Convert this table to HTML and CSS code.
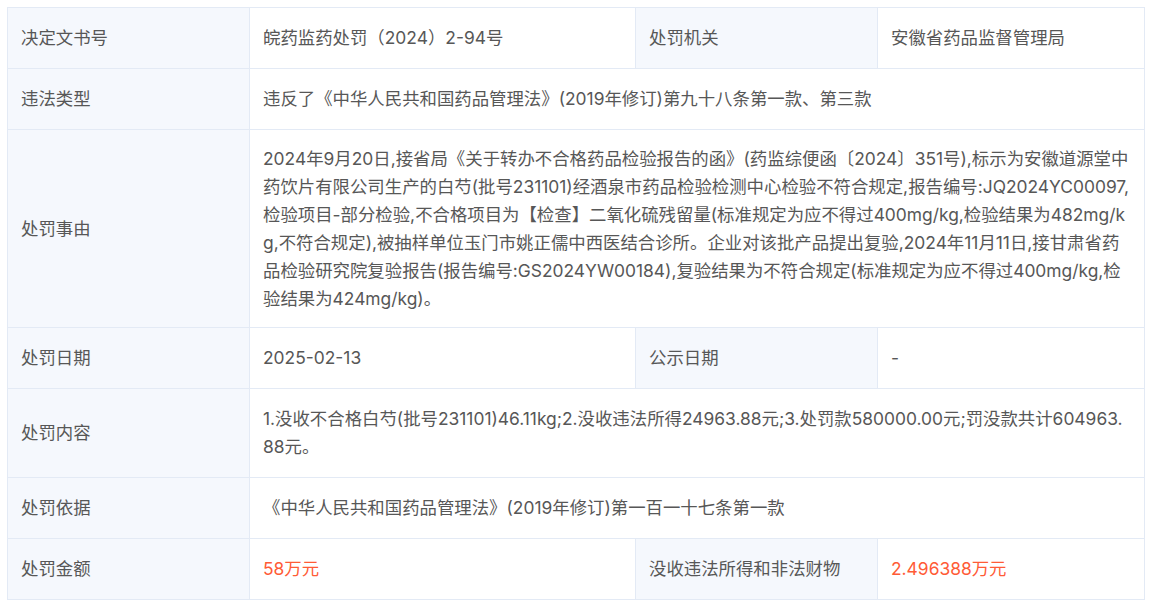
FILE: index.html
```html
<!DOCTYPE html>
<html lang="zh-CN">

<head>
  <meta charset="UTF-8" />
  <meta name="viewport" content="width=device-width, initial-scale=1.0" />
  <title>处罚详情</title>
  <link rel="stylesheet" href="styles.css">
</head>

<body>
  <div class="detail">
    <table class="info-table">
      <colgroup>
        <col class="col-label">
        <col class="col-value">
        <col class="col-label">
        <col class="col-value2">
      </colgroup>
      <tr>
        <th>决定文书号</th>
        <td>皖药监药处罚（2024）2-94号</td>
        <th>处罚机关</th>
        <td>安徽省药品监督管理局</td>
      </tr>
      <tr>
        <th>违法类型</th>
        <td colspan="3">违反了《中华人民共和国药品管理法》(2019年修订)第九十八条第一款、第三款</td>
      </tr>
      <tr>
        <th>处罚事由</th>
        <td colspan="3" class="long reason">2024年9月20日,接省局《关于转办不合格药品检验报告的函》(药监综便函〔2024〕351号),标示为安徽道源堂中药饮片有限公司生产的白芍(批号231101)经酒泉市药品检验检测中心检验不符合规定,报告编号:JQ2024YC00097,检验项目-部分检验,不合格项目为【检查】二氧化硫残留量(标准规定为应不得过400mg/kg,检验结果为482mg/kg,不符合规定),被抽样单位玉门市姚正儒中西医结合诊所。企业对该批产品提出复验,2024年11月11日,接甘肃省药品检验研究院复验报告(报告编号:GS2024YW00184),复验结果为不符合规定(标准规定为应不得过400mg/kg,检验结果为424mg/kg)。</td>
      </tr>
      <tr>
        <th>处罚日期</th>
        <td>2025-02-13</td>
        <th>公示日期</th>
        <td>-</td>
      </tr>
      <tr>
        <th>处罚内容</th>
        <td colspan="3" class="long">1.没收不合格白芍(批号231101)46.11kg;2.没收违法所得24963.88元;3.处罚款580000.00元;罚没款共计604963.88元。</td>
      </tr>
      <tr>
        <th>处罚依据</th>
        <td colspan="3">《中华人民共和国药品管理法》(2019年修订)第一百一十七条第一款</td>
      </tr>
      <tr>
        <th>处罚金额</th>
        <td class="money">58万元</td>
        <th>没收违法所得和非法财物</th>
        <td class="money">2.496388万元</td>
      </tr>
    </table>
  </div>
</body>

</html>
```

FILE: styles.css
```css
html {
  overflow-y: scroll;
}

html::-webkit-scrollbar {
  width: 4px;
}

html::-webkit-scrollbar-track {
  background: #ececec;
}

body {
  margin: 0;
  font-family: Inter, "Noto Sans CJK SC", sans-serif;
  color: #575757;
  background: #fff;
}

.detail {
  padding: 7px 2px 4px 7px;
}

/* info table */
.info-table {
  width: 1137px;
  table-layout: fixed;
  border-collapse: collapse;
  font-size: 17.4px;
  line-height: 28px;
}

.col-label {
  width: 242px;
}

.col-value {
  width: 386px;
}

.col-value2 {
  width: 267px;
}

.info-table th,
.info-table td {
  border: 1px solid #e3eaf5;
  padding: 16px 14px 16px 13px;
  text-align: left;
  vertical-align: middle;
  font-weight: normal;
}

.info-table th {
  background: #f5f8fd;
}

.info-table .long {
  word-break: break-all;
}

.info-table .reason {
  padding-top: 15px;
  padding-bottom: 14px;
}

.money {
  color: #ff5b36;
}
```
